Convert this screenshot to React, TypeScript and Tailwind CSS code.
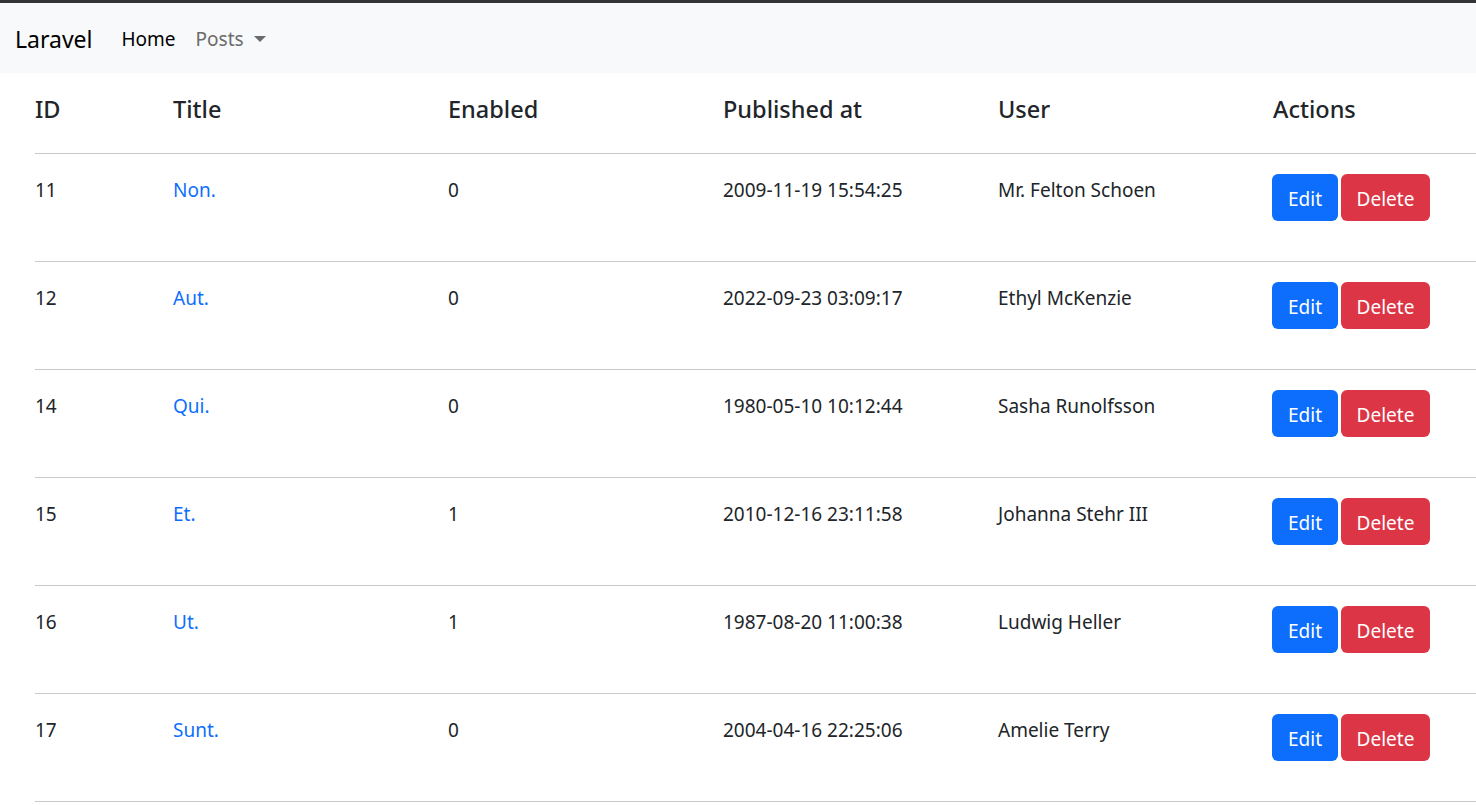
import React from "react";

const rows = [
  { id: 11, title: "Non.", enabled: 0, pub: "2009-11-19 15:54:25", user: "Mr. Felton Schoen" },
  { id: 12, title: "Aut.", enabled: 0, pub: "2022-09-23 03:09:17", user: "Ethyl McKenzie" },
  { id: 14, title: "Qui.", enabled: 0, pub: "1980-05-10 10:12:44", user: "Sasha Runolfsson" },
  { id: 15, title: "Et.", enabled: 1, pub: "2010-12-16 23:11:58", user: "Johanna Stehr III" },
  { id: 16, title: "Ut.", enabled: 1, pub: "1987-08-20 11:00:38", user: "Ludwig Heller" },
  { id: 17, title: "Sunt.", enabled: 0, pub: "2004-04-16 22:25:06", user: "Amelie Terry" },
];

export default function App() {
  return (
    <div
      className="min-h-[805px] bg-white text-[#212529] overflow-hidden"
      style={{ fontFamily: '"Noto Sans", "Open Sans", sans-serif' }}
    >
      <div className="h-[3px] bg-[#343434]" />
      <nav className="h-[70px] bg-[#f8f9fa] flex items-center pl-[15px] pt-[2px]">
        <span className="text-[23px] text-black mr-[29px]">Laravel</span>
        <span className="text-[19px] text-black mr-[20px]">Home</span>
        <span className="text-[19px] text-[#6b6b6b] flex items-center">
          Posts
          <span className="ml-[10px] w-0 h-0 border-l-[6px] border-r-[6px] border-t-[6px] border-l-transparent border-r-transparent border-t-[#6b6b6b]" />
        </span>
      </nav>
      <div className="pl-[35px] w-[1560px]">
        <div className="flex h-[81px] items-center border-b border-[#c9c9c9] text-[23.5px] font-medium pb-[7px]">
          <div className="w-[138px]">ID</div>
          <div className="w-[275px]">Title</div>
          <div className="w-[275px]">Enabled</div>
          <div className="w-[275px]">Published at</div>
          <div className="w-[275px]">User</div>
          <div className="w-[275px]">Actions</div>
        </div>
        {rows.map((r) => (
          <div key={r.id} className="flex h-[108px] border-b border-[#c9c9c9] text-[19px]">
            <div className="w-[138px] pt-[22px] leading-[28px]">{r.id}</div>
            <div className="w-[275px] pt-[22px] leading-[28px] text-[#0d6efd]">{r.title}</div>
            <div className="w-[275px] pt-[22px] leading-[28px]">{r.enabled}</div>
            <div className="w-[275px] pt-[22px] leading-[28px]">{r.pub}</div>
            <div className="w-[275px] pt-[22px] leading-[28px]">{r.user}</div>
            <div className="w-[275px] pt-[20px] flex gap-[3px] items-start -ml-[1px]">
              <button className="h-[47px] w-[66px] rounded-[6px] bg-[#0d6efd] text-white text-[19px] pt-[4px]">Edit</button>
              <button className="h-[47px] w-[89px] rounded-[6px] bg-[#dc3545] text-white text-[19px] pt-[4px]">Delete</button>
            </div>
          </div>
        ))}
      </div>
    </div>
  );
}
